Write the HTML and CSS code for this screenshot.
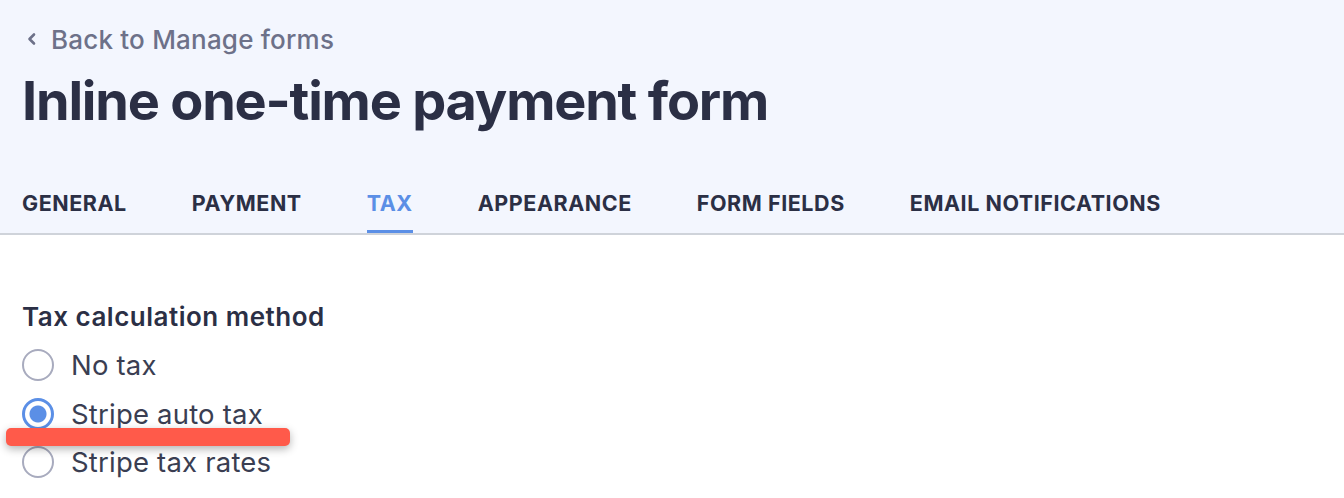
FILE: index.html
```html
<!DOCTYPE html>
<html>
<head>
<meta charset="utf-8">
<link rel="stylesheet" href="styles.css">
</head>
<body>
<header class="head">
  <a class="back" href="#"><svg class="chev" width="12" height="14" viewBox="0 0 12 14"><path d="M8 2.5 L3.5 7 L8 11.5" fill="none" stroke="currentColor" stroke-width="2.6" stroke-linecap="round" stroke-linejoin="round"/></svg>Back to Manage forms</a>
  <h1 class="title">Inline one-time payment form</h1>
  <nav class="tabs">
    <a class="tab">GENERAL</a>
    <a class="tab">PAYMENT</a>
    <a class="tab active">TAX</a>
    <a class="tab">APPEARANCE</a>
    <a class="tab">FORM FIELDS</a>
    <a class="tab">EMAIL NOTIFICATIONS</a>
  </nav>
</header>
<main class="content">
  <div class="label">Tax calculation method</div>
  <div class="options">
    <label class="opt"><span class="radio"></span>No tax</label>
    <label class="opt"><span class="radio checked"></span>Stripe auto tax</label>
    <label class="opt"><span class="radio"></span>Stripe tax rates</label>
    <span class="mark"></span>
  </div>
</main>
</body>
</html>
```
FILE: styles.css
```css
* { box-sizing: border-box; }
html, body { margin: 0; padding: 0; }
body { font-family: Inter, "Noto Sans", sans-serif; background: #fff; color: #2b2f45; }
.head { background: #f3f6fe; border-bottom: 2px solid #cfd3da; padding: 24px 22px 0; }
.back { display: flex; align-items: center; gap: 13px; color: #6d7189; font-size: 26px; font-weight: 500; text-decoration: none; height: 30px; padding-left: 4px; letter-spacing: 0.2px; }
.chev { color: #6d7189; }
.title { margin: 14px 0 0; font-size: 54px; font-weight: 700; line-height: 66px; color: #2b2f45; letter-spacing: -1.2px; }
.tabs { display: flex; gap: 65px; margin-top: 57px; }
.tab { font-size: 21.5px; font-weight: 700; letter-spacing: 0.55px; color: #2b2f45; padding-bottom: 15px; border-bottom: 3px solid transparent; line-height: 24px; }
.tab.active { color: #5b8fe6; border-bottom-color: #5b8fe6; }
.content { padding: 66px 22px 0; }
.label { font-size: 26px; font-weight: 600; line-height: 32px; color: #2b2f45; letter-spacing: 0.5px; }
.options { position: relative; display: flex; flex-direction: column; margin-top: 8px; }
.opt { display: flex; align-items: center; gap: 17px; height: 48.5px; font-size: 27.5px; color: #3a3e52; letter-spacing: 0.2px; }
.radio { width: 32px; height: 32px; border-radius: 50%; border: 2px solid #a8abbe; background: #fff; flex: none; }
.radio.checked { border: 3px solid #5b8fe6; background: radial-gradient(circle, #5b8fe6 0 8px, #fff 9px); }
.mark { position: absolute; left: -16px; top: 87px; width: 284px; height: 18px; border-radius: 5px; background: #ff5a4a; box-shadow: 0 3px 8px rgba(0,0,0,0.3); }
```
